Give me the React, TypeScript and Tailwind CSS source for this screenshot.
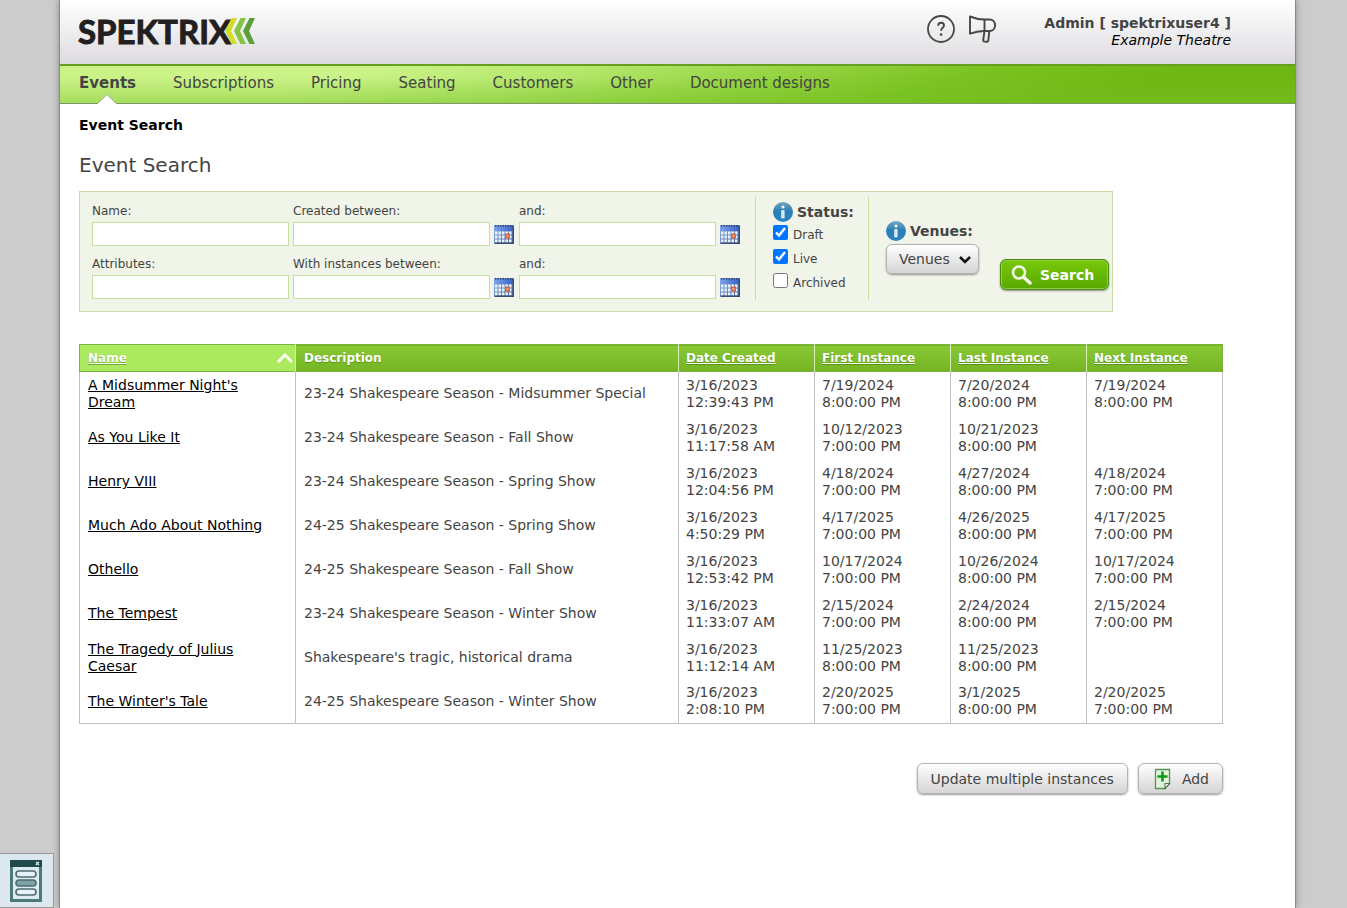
import { ReactNode, useState } from "react";
import { clsx } from "clsx";

const NAV = [
  "Events",
  "Subscriptions",
  "Pricing",
  "Seating",
  "Customers",
  "Other",
  "Document designs",
];

const DATE_COLUMNS = ["Date Created", "First Instance", "Last Instance", "Next Instance"];

const EVENTS = [
  {
    name: "A Midsummer Night's Dream",
    description: "23-24 Shakespeare Season - Midsummer Special",
    dates: ["3/16/2023 12:39:43 PM", "7/19/2024 8:00:00 PM", "7/20/2024 8:00:00 PM", "7/19/2024 8:00:00 PM"],
  },
  {
    name: "As You Like It",
    description: "23-24 Shakespeare Season - Fall Show",
    dates: ["3/16/2023 11:17:58 AM", "10/12/2023 7:00:00 PM", "10/21/2023 8:00:00 PM", ""],
  },
  {
    name: "Henry VIII",
    description: "23-24 Shakespeare Season - Spring Show",
    dates: ["3/16/2023 12:04:56 PM", "4/18/2024 7:00:00 PM", "4/27/2024 8:00:00 PM", "4/18/2024 7:00:00 PM"],
  },
  {
    name: "Much Ado About Nothing",
    description: "24-25 Shakespeare Season - Spring Show",
    dates: ["3/16/2023 4:50:29 PM", "4/17/2025 7:00:00 PM", "4/26/2025 8:00:00 PM", "4/17/2025 7:00:00 PM"],
  },
  {
    name: "Othello",
    description: "24-25 Shakespeare Season - Fall Show",
    dates: ["3/16/2023 12:53:42 PM", "10/17/2024 7:00:00 PM", "10/26/2024 8:00:00 PM", "10/17/2024 7:00:00 PM"],
  },
  {
    name: "The Tempest",
    description: "23-24 Shakespeare Season - Winter Show",
    dates: ["3/16/2023 11:33:07 AM", "2/15/2024 7:00:00 PM", "2/24/2024 8:00:00 PM", "2/15/2024 7:00:00 PM"],
  },
  {
    name: "The Tragedy of Julius Caesar",
    description: "Shakespeare's tragic, historical drama",
    dates: ["3/16/2023 11:12:14 AM", "11/25/2023 8:00:00 PM", "11/25/2023 8:00:00 PM", ""],
  },
  {
    name: "The Winter's Tale",
    description: "24-25 Shakespeare Season - Winter Show",
    dates: ["3/16/2023 2:08:10 PM", "2/20/2025 7:00:00 PM", "3/1/2025 8:00:00 PM", "2/20/2025 7:00:00 PM"],
  },
];

const Logo = () => (
  <a href="#" className="flex h-[62px] items-center text-[#231f20]" aria-label="Spektrix">
    <span className="font-['Lato',sans-serif] text-[33px] leading-9 font-bold [-webkit-text-stroke:1px_#231f20]">
      SPEKTRIX
    </span>
    <svg width="30" height="26" viewBox="0 0 30 26" className="-ml-1.5">
      <path d="M0 13 6.500 0h5.500L6 13l6 13H6.500z" fill="#d3dc28" />
      <path d="M9 13 15.500 0H21l-6 13 6 13h-5.500z" fill="#85c441" />
      <path d="M18 13 24.500 0H30l-6 13 6 13h-5.500z" fill="#5b9e3b" />
    </svg>
  </a>
);

const HelpIcon = () => (
  <svg width="28" height="28" viewBox="0 0 28 28" fill="none" stroke="#4a4648" strokeWidth="1.800">
    <circle cx="14" cy="14" r="13" />
    <path d="M11.200 10.800c0-1.900 1.200-3 2.900-3s2.900 1.100 2.900 2.700c0 2.300-2.900 2.300-2.900 5.200" strokeWidth="1.900" />
    <circle cx="14.100" cy="19.600" r="1.300" fill="#4a4648" stroke="none" />
  </svg>
);

const MegaphoneIcon = () => (
  <svg width="28" height="28" viewBox="0 0 28 28" fill="none" stroke="#4a4648" strokeWidth="1.900" strokeLinejoin="round">
    <path d="M1 1.500c5 2 9.500 3 14 3h5.500c3.400 0 5.600 2.500 5.600 5.700 0 3.100-2.200 5.800-5.600 5.800H15c-5 0-9.500 1-14 2.700z" />
    <path d="M15.500 4.500V16l-1.300 9c-.1 1 .3 1.500 1.100 1.600l2.600.2c.9 0 1.300-.3 1.400-1.200l1-9.600" />
  </svg>
);

const CalendarIcon = () => (
  <svg width="21" height="19" viewBox="0 0 21 19">
    <defs>
      <linearGradient id="calTop" x1="0" x2="1" y1="0" y2="0">
        <stop offset="0" stopColor="#7da4ea" />
        <stop offset="1" stopColor="#3560c8" />
      </linearGradient>
      <linearGradient id="calBody" x1="0" x2="1" y1="0" y2="1">
        <stop offset="0" stopColor="#8eb4e6" />
        <stop offset="1" stopColor="#4a6296" />
      </linearGradient>
    </defs>
    <path d="M0 0h20v19H0z" fill="url(#calBody)" />
    <path d="M0 1h20v5H0z" fill="url(#calTop)" />
    <path d="M1 .8h18" stroke="#263e70" strokeWidth="1.600" strokeDasharray="1.500 1" />
    {[6.5, 10.5, 14.5].map((y) =>
      [1, 4.5, 8, 11.5, 15].map((x) => (
        <rect key={`${x}-${y}`} x={x} y={y} width="2.500" height="3" fill="#e8f1fc" />
      )),
    )}
    <path d="M11 8.500h5v5h-5z" fill="#e0603a" />
    <path d="M12.500 10h2v2h-2z" fill="#f7a487" />
    <path d="M19.300 1v17.300H1" fill="none" stroke="#3c4c70" strokeWidth="1.400" />
  </svg>
);

const InfoIcon = () => (
  <svg width="20" height="20" viewBox="0 0 20 20">
    <defs>
      <linearGradient id="infoFill" x1="0" x2="0" y1="0" y2="1">
        <stop offset="0" stopColor="#7aa5bf" />
        <stop offset="0.450" stopColor="#2b7fb6" />
        <stop offset="1" stopColor="#2b84c0" />
      </linearGradient>
    </defs>
    <circle cx="10" cy="10" r="10" fill="url(#infoFill)" />
    <circle cx="10" cy="5" r="1.500" fill="#fff" />
    <path d="M8.300 8.300h3.200v8H8.300z" fill="#fff" />
    <path d="M9.300 9.300h1.200v6H9.300z" fill="#b9dcf0" />
  </svg>
);

const SearchIcon = () => (
  <svg width="22" height="20" viewBox="0 0 22 20" fill="none" stroke="#f4fbe8">
    <circle cx="8" cy="7.500" r="6" strokeWidth="2.500" />
    <path d="m12.500 12 6.500 6" strokeWidth="3.500" strokeLinecap="round" />
  </svg>
);

const AddPageIcon = () => (
  <svg width="20" height="22" viewBox="0 0 20 22">
    <path d="M3.500 1.500h14v14l-4.500 5H3.500z" fill="#e3f2df" stroke="#5c8f5a" strokeWidth="1.300" />
    <path d="M13 20.500v-5h4.500z" fill="#f8fcf7" stroke="#4c7a4a" strokeWidth="1.100" />
    <path d="M10.500 3.500v10M5.500 8.500h10" stroke="#0d9a12" strokeWidth="2.600" />
  </svg>
);

const PanelIcon = () => (
  <svg width="32" height="42" viewBox="0 0 32 42">
    <path d="M1.500 1.500h29v39h-29z" fill="#dcebf0" stroke="#4c787a" strokeWidth="3" />
    <path d="M0 0h32v7H0z" fill="#1f4a4c" />
    <path d="m26 2 3 3m0-3-3 3" stroke="#dcebf0" strokeWidth="1.200" />
    <rect x="6" y="11" width="20" height="6" rx="3" fill="#e8f1f5" stroke="#4c6c70" strokeWidth="1.600" />
    <rect x="6" y="20" width="20" height="6" rx="3" fill="#7ba3a5" stroke="#4c6c70" strokeWidth="1.600" />
    <rect x="6" y="29" width="20" height="6" rx="3" fill="#e8f1f5" stroke="#4c6c70" strokeWidth="1.600" />
  </svg>
);

const Field = ({ id, label, calendar }: { id: string; label: string; calendar?: boolean }) => (
  <div className="flex flex-col gap-px">
    <label htmlFor={id} className="text-[12px] leading-[19px]">
      {label}
    </label>
    <div className="flex items-center gap-1">
      <input id={id} type="text" className="h-6 w-[197px] border border-[#c5dfa0] bg-white px-1 text-[13px]" />
      {calendar && (
        <button type="button" aria-label={`Pick a date, ${label}`}>
          <CalendarIcon />
        </button>
      )}
    </div>
  </div>
);

const GreyButton = ({ children }: { children: ReactNode }) => (
  <button
    type="button"
    className="flex h-[31px] items-center gap-[10px] rounded-md border border-[#b5b3b5] bg-linear-to-b from-white to-[#d6d4d6] px-[13px] text-sm shadow-[0_1px_2px_rgba(0,0,0,0.4)]"
  >
    {children}
  </button>
);

export default function App() {
  const [statuses, setStatuses] = useState<Record<string, boolean>>({
    Draft: true,
    Live: true,
    Archived: false,
  });

  return (
    <div className="min-h-screen bg-[#cccccc] pr-[52px] pl-[60px] font-['Verdana','DejaVu_Sans',sans-serif] text-[#444444]">
      <div className="min-h-screen bg-white shadow-[0_0_0_1px_#888888,0_0_8px_rgba(0,0,0,0.4)]">
        <header className="flex h-16 justify-between bg-linear-to-b from-white to-[#dddbdf] pr-16 pl-[18px]">
          <Logo />
          <div className="flex items-start pt-[15px]">
            <button type="button" aria-label="Help" className="mr-[14px]">
              <HelpIcon />
            </button>
            <button type="button" aria-label="Announcements" className="mr-[47px]">
              <MegaphoneIcon />
            </button>
            <div className="text-right text-sm leading-[17px]">
              <p className="font-bold">Admin [ spektrixuser4 ]</p>
              <p className="text-black italic">Example Theatre</p>
            </div>
          </div>
        </header>

        <nav className="flex h-10 gap-[37px] border-t-2 border-b border-t-[#67a020] border-b-[#7f966c] bg-[linear-gradient(to_bottom,transparent_30%,rgba(120,195,40,0.45)),linear-gradient(165deg,#cbf388_0%,#cbf388_24%,#b2e669_40%,#96d443_54%,#7cc322_68%,#6fb612_84%)] px-[19px]">
          {NAV.map((item, i) => (
            <a
              key={item}
              href="#"
              className={clsx("relative flex h-full items-start pt-[5px] text-[15px] leading-6", i === 0 && "font-bold")}
            >
              {item}
              {i === 0 && (
                <svg width="20" height="10" viewBox="0 0 20 10" className="absolute -bottom-px left-1/2 -translate-x-1/2">
                  <path d="M0 10 10 0l10 10z" fill="#fff" />
                  <path d="M0 10 10 .5 20 10" fill="none" stroke="#8bab66" />
                </svg>
              )}
            </a>
          ))}
        </nav>

        <main className="pt-3 pr-[72px] pb-12 pl-[19px]">
          <p className="text-sm leading-[18px] font-bold text-black">Event Search</p>
          <h1 className="mt-[17px] text-xl leading-7">Event Search</h1>

          <form
            className="mt-3 flex w-fit border border-[#c9dda9] bg-[#f0f4e9] pr-[3px] pl-3"
            onSubmit={(e) => e.preventDefault()}
          >
            <div className="grid grid-cols-[auto_auto_auto] gap-x-1 gap-y-[9px] pt-[10px] pr-[14px] pb-3">
              <Field id="name" label="Name:" />
              <Field id="created-from" label="Created between:" calendar />
              <Field id="created-to" label="and:" calendar />
              <Field id="attributes" label="Attributes:" />
              <Field id="instances-from" label="With instances between:" calendar />
              <Field id="instances-to" label="and:" calendar />
            </div>

            <fieldset className="mt-[5px] mb-[11px] w-[113px] border-l border-[#c5dfa0] pt-[5px] pl-[17px]">
              <div className="mb-[3px] flex items-center gap-1 text-sm leading-5 font-bold">
                <InfoIcon />
                Status:
              </div>
              {Object.entries(statuses).map(([status, checked]) => (
                <label key={status} className="flex h-6 items-start gap-[5px] text-[12px] leading-5">
                  <input
                    type="checkbox"
                    className="size-[15px]"
                    checked={checked}
                    onChange={() => setStatuses({ ...statuses, [status]: !checked })}
                  />
                  {status}
                </label>
              ))}
            </fieldset>

            <div className="mt-[5px] mb-[11px] border-l border-[#c5dfa0] pt-6 pl-[17px]">
              <label htmlFor="venues" className="mb-[3px] flex items-center gap-1 text-sm leading-5 font-bold">
                <InfoIcon />
                Venues:
              </label>
              <div className="relative w-[93px]">
                <select
                  id="venues"
                  className="h-[30px] w-full appearance-none rounded-md border border-[#b5b3b5] bg-linear-to-b from-white to-[#d6d4d6] pl-3 text-sm shadow-[0_1px_2px_rgba(0,0,0,0.4)]"
                >
                  <option>Venues</option>
                </select>
                <svg
                  width="12"
                  height="8"
                  viewBox="0 0 12 8"
                  className="pointer-events-none absolute top-3 right-2"
                  fill="none"
                  stroke="#111"
                  strokeWidth="2.500"
                >
                  <path d="m1 1 5 5 5-5" />
                </svg>
              </div>
            </div>

            <button
              type="submit"
              className="mb-[21px] ml-[21px] flex h-[31px] items-center gap-[7px] self-end rounded-md border border-[#4c8a10] bg-linear-to-b from-[#79c80c] to-[#57a800] pr-[14px] pl-[10px] text-sm font-bold text-white shadow-[inset_0_0_0_1px_#8fd04a,0_1px_2px_rgba(0,0,0,0.4)]"
            >
              <SearchIcon />
              Search
            </button>
          </form>

          <table className="mt-8 w-full table-fixed border-collapse border border-[#c0c0c0] text-sm leading-[17px]">
            <colgroup>
              <col className="w-[216px]" />
              <col />
              <col className="w-[136px]" />
              <col className="w-[136px]" />
              <col className="w-[136px]" />
              <col className="w-[136px]" />
            </colgroup>
            <thead>
              <tr className="h-[27px] border border-[#7fb23c] bg-linear-to-b from-[#8ac934] to-[#74b524] text-left text-[12px] text-white [text-shadow:0_1px_1px_rgba(60,110,0,0.5)]">
                <th className="border-r border-[#d5ecb8] bg-[#abe95f] pr-[2px] pl-2">
                  <div className="flex items-center justify-between">
                    <a href="#" className="underline">
                      Name
                    </a>
                    <svg width="16" height="10" viewBox="0 0 16 10" fill="none" stroke="#f8fff0" strokeWidth="3">
                      <path d="m1 9 7-7 7 7" />
                    </svg>
                  </div>
                </th>
                <th className="border-r border-[#d5ecb8] px-2">Description</th>
                {DATE_COLUMNS.map((column) => (
                  <th key={column} className="border-r border-[#d5ecb8] px-[7px] last:border-[#7fb23c]">
                    <a href="#" className="underline">
                      {column}
                    </a>
                  </th>
                ))}
              </tr>
            </thead>
            <tbody>
              {EVENTS.map((event) => (
                <tr key={event.name} className="h-11">
                  <td className="border-r border-[#c0c0c0] pr-4 pl-2">
                    <a href="#" className="text-black underline">
                      {event.name}
                    </a>
                  </td>
                  <td className="border-r border-[#c0c0c0] px-2">{event.description}</td>
                  {event.dates.map((date, i) => {
                    const [day, ...time] = date.split(" ");
                    return (
                      <td key={i} className="border-r border-[#c0c0c0] px-[7px]">
                        {day}
                        <br />
                        {time.join(" ")}
                      </td>
                    );
                  })}
                </tr>
              ))}
            </tbody>
          </table>

          <div className="mt-[39px] flex justify-end gap-[10px]">
            <GreyButton>Update multiple instances</GreyButton>
            <GreyButton>
              <AddPageIcon />
              Add
            </GreyButton>
          </div>
        </main>
      </div>

      <button
        type="button"
        aria-label="Open panel"
        className="fixed bottom-0 left-0 flex h-[55px] w-[54px] items-center border border-l-0 border-[#999999] bg-[#dce8f0] pl-[10px]"
      >
        <PanelIcon />
      </button>
    </div>
  );
}
